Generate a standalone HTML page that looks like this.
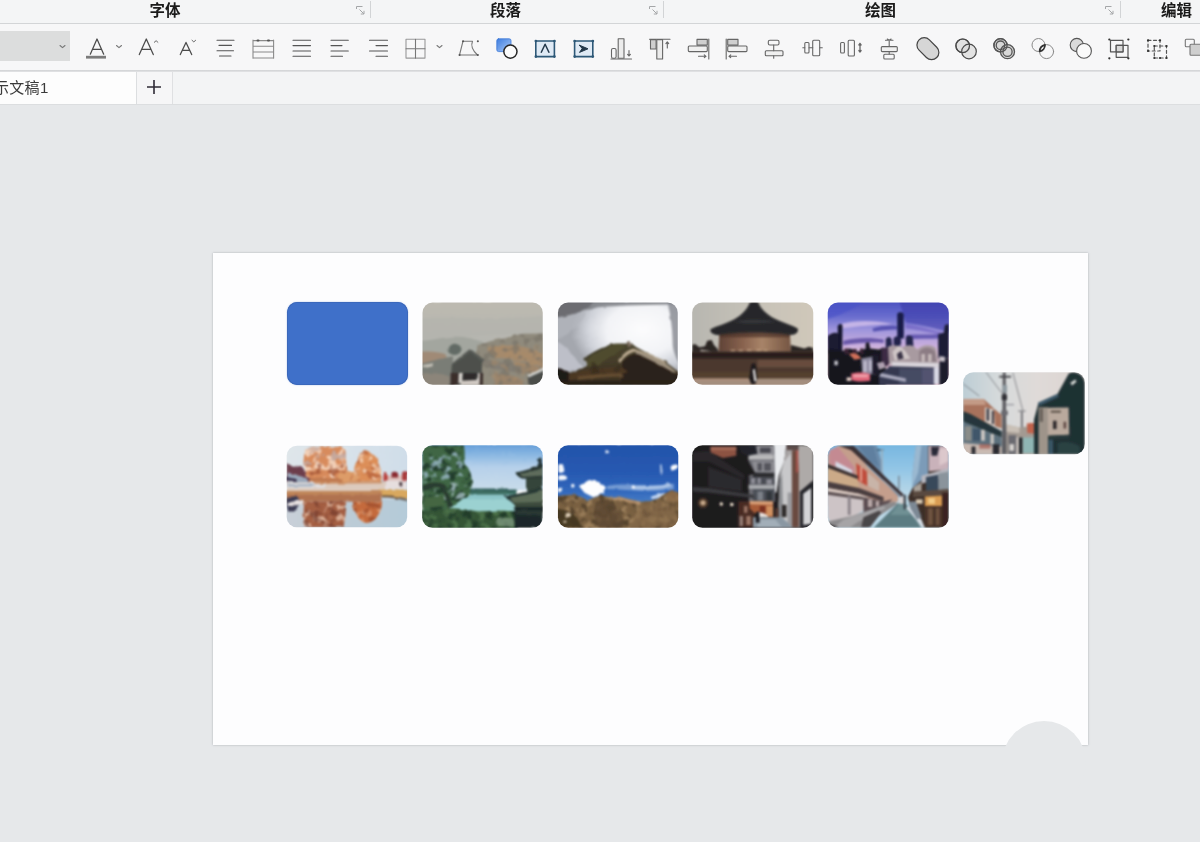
<!DOCTYPE html>
<html lang="zh-CN">
<head>
<meta charset="utf-8">
<title>演示文稿1</title>
<style>
html,body{margin:0;padding:0;}
body{width:1200px;height:842px;overflow:hidden;position:relative;background:#e6e8ea;font-family:"Liberation Sans","Noto Sans CJK SC",sans-serif;color:#222;}
.abs{position:absolute;}
#grp{left:0;top:0;width:1200px;height:23px;background:#f4f5f6;}
#grp .lbl{position:absolute;top:1px;font-size:15.500px;line-height:20px;font-weight:700;color:#1a1a1a;white-space:nowrap;filter:blur(.5px);}
#grp .vsep{position:absolute;top:1px;width:1px;height:17px;background:#d2d4d6;}
#grp .launch{position:absolute;top:6px;width:9px;height:9px;}
#ln1{left:0;top:23px;width:1200px;height:1px;background:#d3d5d7;}
#tools{left:0;top:24px;width:1200px;height:46px;background:#f7f7f8;}
#ln2{left:0;top:70px;width:1200px;height:2px;background:linear-gradient(#d0d2d4,#e4e5e7);}
#tabs{left:0;top:72px;width:1200px;height:32px;background:#f3f4f5;}
#tab1{left:0;top:0;width:136px;height:32px;background:#fdfdfd;border-right:1px solid #dcdee0;}
#tab1 span{position:absolute;left:-6px;top:6px;font-size:15px;line-height:20px;color:#3a3a3a;white-space:nowrap;filter:blur(.5px);letter-spacing:.3px}
#plus{left:137px;top:0;width:35px;height:32px;background:#f6f6f7;border-right:1px solid #dfe0e2;}
#ln3{left:0;top:104px;width:1200px;height:1px;background:#dcdee0;}
#fontbox{left:0;top:31px;width:70px;height:29.500px;background:#dcdddd;}
#slide{left:213px;top:253px;width:875px;height:492px;background:#fdfdfe;box-shadow:0 0 2px 0 rgba(120,125,135,.55);overflow:hidden;}
#wm{left:1001.500px;top:721px;width:84px;height:84px;border-radius:50%;background:#e6e8ea;}
.pic{position:absolute;width:121px;height:83px;border-radius:11px;overflow:hidden;}
.pic svg{position:absolute;left:0;top:0;}
</style>
</head>
<body>
<div id="grp" class="abs">
  <span class="lbl" style="left:149.500px">字体</span>
  <span class="lbl" style="left:490px">段落</span>
  <span class="lbl" style="left:865px">绘图</span>
  <span class="lbl" style="left:1161px">编辑</span>
  <svg class="launch" style="left:356px" viewBox="0 0 9 9"><path d="M.5 3V.5h6M3.500 3.500l4.500 4.500M8 4.800V8H4.800" fill="none" stroke="#a4a6a8" stroke-width="1"/></svg>
  <svg class="launch" style="left:649px" viewBox="0 0 9 9"><path d="M.5 3V.5h6M3.500 3.500l4.500 4.500M8 4.800V8H4.800" fill="none" stroke="#a4a6a8" stroke-width="1"/></svg>
  <svg class="launch" style="left:1105px" viewBox="0 0 9 9"><path d="M.5 3V.5h6M3.500 3.500l4.500 4.500M8 4.800V8H4.800" fill="none" stroke="#a4a6a8" stroke-width="1"/></svg>
  <i class="vsep" style="left:370px"></i>
  <i class="vsep" style="left:663px"></i>
  <i class="vsep" style="left:1120px"></i>
</div>
<div id="ln1" class="abs"></div>
<div id="tools" class="abs"></div>
<div id="fontbox" class="abs"></div>
<svg class="abs" style="left:0;top:24px;filter:blur(.45px)" width="1200" height="46" viewBox="0 24 1200 46" fill="none" stroke="#555" stroke-width="1.1" stroke-linecap="round" stroke-linejoin="round">
  <!-- dropdown chevrons -->
  <path d="M60 45.5l2.5 2.2l2.5-2.2M116.5 45.5l2.5 2.2l2.5-2.2M437 45.5l2.5 2.2l2.5-2.2" stroke="#777"/>
  <!-- font colour A -->
  <path d="M90.3 54.2L97 39l6.7 15.2M92.6 49.3h8.8" stroke="#4a4a4a" stroke-width="1.25"/>
  <rect x="86" y="55.8" width="20" height="2.8" fill="#7b7b7b" stroke="none"/>
  <!-- grow font -->
  <path d="M139.3 54.6L146.3 39l7 15.6M141.7 49.4h9.2" stroke="#4a4a4a" stroke-width="1.25"/>
  <path d="M154.3 42.3l1.8-1.6l1.8 1.6" stroke="#666" stroke-width="1"/>
  <!-- shrink font -->
  <path d="M180.3 54.6L186 42.4l5.7 12.2M182.3 50.4h7.4" stroke="#4a4a4a" stroke-width="1.25"/>
  <path d="M192 40.3l1.8 1.6l1.8-1.6" stroke="#666" stroke-width="1"/>
  <!-- line spacing -->
  <path d="M217 40.3h17M219 45.4h12.5M217 50.7h16.5M219.5 56h11.5"/>
  <!-- paragraph box -->
  <g stroke="#8a8a8a">
    <path d="M253 40v18.2M273.6 40v18.2M253 40.6h20.6M253 46.2h20.6M253 52h20.6M253 58h20.6"/>
    <path d="M257.5 40.6h1M268 40.6h1" stroke="#555" stroke-width="2"/>
  </g>
  <!-- justify -->
  <path d="M293 40.3h17.5M293 45.6h17.5M293 51h17.5M293 56.3h17.5"/>
  <!-- align left -->
  <path d="M331 40.3h17.3M331 45.6h11M331 51h17.3M331 56.3h11.5"/>
  <!-- align right -->
  <path d="M369.5 40.3h18M376 45.6h11.5M369.5 51h18M376 56.3h11.5"/>
  <!-- table -->
  <rect x="406" y="39.3" width="19" height="18.8" stroke="#999"/>
  <path d="M415.5 39.3v18.8M406 48.7h19" stroke="#777"/>
  <!-- freeform shape -->
  <path d="M459.5 55l3.5-13.8h9.5c-2 4.500 .5 9.500 5 13.800z" stroke="#777"/>
  <path d="M463 41.200h.1M477.800 41.200h.1M459.500 55h.1M477.800 55h.1" stroke="#555" stroke-width="2"/>
  <!-- shapes (blue) -->
  <defs><linearGradient id="gb" x1="0" y1="0" x2="1" y2="1"><stop offset="0" stop-color="#3f7ee0"/><stop offset="1" stop-color="#a9c9f6"/></linearGradient></defs>
  <rect x="496.800" y="38.800" width="14.200" height="12.800" rx="1.800" fill="url(#gb)" stroke="#3c78d8" stroke-width=".8"/>
  <circle cx="510.400" cy="51.600" r="6.600" fill="#fbfbfb" stroke="#262626" stroke-width="1.500"/>
  <!-- text box A -->
  <rect x="535.800" y="41" width="18.600" height="15.600" fill="#dfeaf5" stroke="#2d5877" stroke-width="1.600"/>
  <path d="M541.300 52.300l3.800-8l3.800 8" stroke="#23384a" stroke-width="1.500"/>
  <path d="M535.800 41h.1M554.400 41h.1M535.800 56.600h.1M554.400 56.600h.1" stroke="#2d5877" stroke-width="2.600"/>
  <!-- vertical text box -->
  <rect x="574.600" y="41" width="18.200" height="15.600" fill="#dfeaf5" stroke="#2d5877" stroke-width="1.600"/>
  <path d="M579.500 45.200l8.500 3.600l-8.500 3.600l2.500-3.600z" fill="#23384a" stroke="#23384a" stroke-width="1"/>
  <path d="M574.600 41h.1M592.800 41h.1M574.600 56.600h.1M592.800 56.600h.1" stroke="#2d5877" stroke-width="2.600"/>
  <!-- align bottom -->
  <g stroke="#666">
  <path d="M611 59h20.500"/>
  <rect x="611.500" y="48.500" width="4.600" height="9.800" rx="1.500"/>
  <rect x="618.200" y="38.800" width="5.800" height="19.500" fill="#ececec"/>
  <path d="M629 50.500v5.500M627.600 54.300l1.400 1.700l1.400-1.700"/>
  <!-- align top -->
  <path d="M649.500 39.200h20.500"/>
  <rect x="650.500" y="39.600" width="5.600" height="9.400" fill="#cfcfcf"/>
  <rect x="656.800" y="39.600" width="5.800" height="19.400" fill="#ececec"/>
  <path d="M667.300 42v6M665.900 43.600l1.400-1.700l1.400 1.700"/>
  <!-- align right -->
  <path d="M708.800 39v20"/>
  <rect x="697" y="39.400" width="10.300" height="5.700" fill="#cfcfcf"/>
  <rect x="688.300" y="46" width="19" height="5.600" rx="1" fill="#f0f0f0"/>
  <path d="M698.500 56.300h7.500M704.300 54.900l1.700 1.400l-1.700 1.400"/>
  <!-- align left -->
  <path d="M726.200 39v20"/>
  <rect x="727.700" y="39.400" width="10.300" height="5.700" fill="#cfcfcf"/>
  <rect x="727.700" y="46" width="19.300" height="5.600" rx="1" fill="#f0f0f0"/>
  <path d="M729 56.300h7.500M730.700 54.900l-1.700 1.400l1.700 1.400"/>
  <!-- center horizontally -->
  <rect x="768.300" y="40.200" width="10.700" height="4.800" rx="1.500"/>
  <rect x="765.300" y="50.800" width="17.700" height="5" rx="1" fill="#f0f0f0"/>
  <path d="M773.700 45v5.800M773.700 55.800v2.400"/>
  <!-- distribute h -->
  <rect x="804.800" y="42.500" width="4.200" height="10.500" rx="1"/>
  <rect x="812.700" y="40.200" width="7" height="15.600" rx="1"/>
  <path d="M802.800 47.800h2M809 47.800h3.700M819.700 47.800h2.600"/>
  <!-- distribute h 2 -->
  <rect x="840.600" y="42.500" width="3.800" height="10.500" rx="1"/>
  <rect x="848.200" y="40.200" width="6.200" height="15.800" rx="1"/>
  <path d="M860 43.500v8.500M858.900 45l1.100-1.500l1.100 1.500M858.900 50.500l1.100 1.500l1.100-1.500" stroke-width="1.300"/>
  <!-- center vertically -->
  <path d="M885.500 40.200h7.500M887.300 39l1.900 1.200l1.900-1.200"/>
  <path d="M889.200 41v5.500M889.200 51.500v2.500"/>
  <rect x="881.300" y="46.600" width="16" height="5" rx="1" fill="#f0f0f0"/>
  <rect x="883.800" y="54.200" width="10.400" height="4.800" rx="1"/>
  </g>
  <!-- merge shapes: union -->
  <rect x="-12.500" y="-7.300" width="25" height="14.600" rx="7.300" transform="translate(927.900 48.700) rotate(45)" fill="#d6d6d6" stroke="#444" stroke-width="1.200"/>
  <!-- combine -->
  <circle cx="962.700" cy="45.800" r="6.800" fill="#e2e2e2" stroke="#4a4a4a" stroke-width="1.200"/>
  <circle cx="969" cy="51.500" r="7.300" fill="#dcdcdc" fill-opacity=".75" stroke="#4a4a4a" stroke-width="1.200"/>
  <circle cx="962.700" cy="45.800" r="6.800" stroke="#4a4a4a" stroke-width="1.200"/>
  <!-- fragment -->
  <g stroke="#555" stroke-width="1.300">
  <circle cx="1000.500" cy="45.300" r="6.600" fill="#d8d8d8"/>
  <circle cx="1007.500" cy="51.700" r="7" fill="#d8d8d8"/>
  <circle cx="1000.500" cy="45.300" r="4.300"/>
  <circle cx="1007.500" cy="51.700" r="4.600"/>
  <circle cx="1000.500" cy="45.300" r="6.600"/>
  </g>
  <!-- intersect -->
  <circle cx="1038.500" cy="45" r="6.500" stroke="#888" stroke-width="1"/>
  <circle cx="1046.600" cy="51.600" r="7" stroke="#888" stroke-width="1"/>
  <path d="M1045 44.800A6.500 6.500 0 0 1 1039.600 51.400A7 7 0 0 1 1045 44.800Z" stroke="#333" stroke-width="1.700"/>
  <!-- subtract -->
  <circle cx="1076.800" cy="45" r="6.600" fill="#dadada" stroke="#555" stroke-width="1.100"/>
  <circle cx="1084" cy="50.900" r="7.400" fill="#fafafa" stroke="#555" stroke-width="1.100"/>
  <!-- group -->
  <g stroke="#555" stroke-width="1.200">
  <rect x="1110.500" y="40.300" width="12.500" height="11.500"/>
  <rect x="1116.200" y="45.300" width="11.800" height="12"/>
  <rect x="1116.200" y="45.300" width="6.800" height="6.500" fill="#d8d8d8"/>
  <path d="M1109.300 58.300h.1M1128.300 39.500h.1M1128.300 58.300h.1M1109.300 39.500h.1" stroke="#333" stroke-width="2.200"/>
  <!-- ungroup -->
  <rect x="1148" y="40.300" width="12" height="10.700" stroke-dasharray="3 2.500"/>
  <rect x="1154.300" y="46" width="12.200" height="12" stroke-dasharray="3 2.500"/>
  <path d="M1148 40.300h.1M1160 40.300h.1M1148 51h.1M1166.500 46h.1M1154.300 58h.1M1166.500 58h.1M1160 58h.1M1154.300 46h.1" stroke="#333" stroke-width="2.200"/>
  </g>
  <!-- bring forward (clipped) -->
  <rect x="1185.300" y="39.300" width="9" height="7.500" rx="1" stroke="#777"/>
  <rect x="1190" y="44.300" width="12" height="11" rx="1" fill="#cfcfcf" stroke="#777"/>
</svg>

<div id="ln2" class="abs"></div>
<div id="tabs" class="abs">
  <div id="tab1" class="abs"><span>示文稿1</span></div>
  <div id="plus" class="abs"><svg class="abs" style="left:8.500px;top:6.700px;filter:blur(.35px)" width="16" height="16" viewBox="0 0 16 16"><path d="M8 1v14M1 8h14" stroke="#2f2b36" stroke-width="1.6" fill="none"/></svg></div>
</div>
<div id="ln3" class="abs"></div>

<div id="slide" class="abs"></div>
<div class="abs" style="left:287px;top:302px;width:120.500px;height:82.800px;border-radius:10.500px;background:#3f70c9;box-shadow:inset 0 0 0 .8px #3a66b8,0 0 1.500px rgba(63,112,201,.55)"></div>
<svg class="abs" style="left:416px;top:296px" width="134" height="94" viewBox="0 0 1200 842">
<defs><clipPath id="cp2"><rect x="58" y="58" width="1077" height="737" rx="92"/></clipPath>
<filter id="bp2" x="0" y="0" width="1200" height="842" filterUnits="userSpaceOnUse" color-interpolation-filters="sRGB">
<feTurbulence type="fractalNoise" baseFrequency=".012" numOctaves="2" seed="3" result="n"/>
<feDisplacementMap in="SourceGraphic" in2="n" scale="22" xChannelSelector="R" yChannelSelector="G" result="d"/>
<feGaussianBlur in="d" stdDeviation="8"/>
</filter>
<filter id="mp2" x="0" y="0" width="1200" height="842" filterUnits="userSpaceOnUse" color-interpolation-filters="sRGB">
<feTurbulence type="fractalNoise" baseFrequency=".014" numOctaves="2" seed="21" result="n"/>
<feColorMatrix in="n" type="matrix" values="0 0 0 0 0  0 0 0 0 0  0 0 0 0 0  7 0 0 0 -3.500" result="a"/>
<feComposite in="SourceGraphic" in2="a" operator="in"/>
</filter>
<filter id="kp2" x="0" y="0" width="1200" height="842" filterUnits="userSpaceOnUse" color-interpolation-filters="sRGB">
<feTurbulence type="fractalNoise" baseFrequency=".016" numOctaves="2" seed="47" result="n"/>
<feColorMatrix in="n" type="matrix" values="0 0 0 0 0  0 0 0 0 0  0 0 0 0 0  0 7 0 0 -3.600" result="a"/>
<feComposite in="SourceGraphic" in2="a" operator="in"/>
</filter>
<filter id="ep2" x="-5%" y="-5%" width="110%" height="110%"><feGaussianBlur stdDeviation="3.500"/></filter></defs>
<g filter="url(#ep2)"><g clip-path="url(#cp2)"><g filter="url(#bp2)">
<defs><linearGradient id="p2s" x1="0" y1="0" x2="0" y2="1"><stop offset="0" stop-color="#bdbab0"/><stop offset=".45" stop-color="#b6b6b0"/><stop offset="1" stop-color="#a9aca6"/></linearGradient>
<path id="p2h" d="M560 440C640 410 700 395 760 385C840 372 900 345 960 338L1160 335L1160 820L420 820Z"/></defs>
<rect x="40" y="40" width="1120" height="780" fill="url(#p2s)"/>
<path d="M40 400C150 395 260 365 360 362C460 364 520 390 600 410L600 600L40 600Z" fill="#a3a69f"/>
<path d="M40 200C300 180 700 220 1160 180L1160 330L40 380Z" fill="#b2b3ad" opacity=".6"/>
<use href="#p2h" fill="#8f8a7c"/>
<path d="M640 470C720 440 800 440 900 445C980 450 1060 480 1140 520L1140 640C1040 600 900 560 780 560C700 560 660 520 640 470Z" fill="#a58a6c"/>
<path d="M880 600C940 590 1040 600 1100 640L1100 700L900 690Z" fill="#9f866a"/>
<path d="M720 700C800 690 900 720 960 760L960 820L700 820Z" fill="#9a846c"/>
<path d="M600 560L1000 640L1000 700L620 640Z" fill="#7f7b72" opacity=".8"/>
<use href="#p2h" fill="#787268" filter="url(#mp2)" opacity=".65"/>
<path d="M640 440L1160 420L1160 760L640 760Z" fill="#ad8c68" filter="url(#kp2)" opacity=".45"/>
<path d="M40 500C120 490 200 500 260 520L300 600L40 640Z" fill="#a08a76"/>
<path d="M40 610C140 580 240 560 330 540L330 820L40 820Z" fill="#7a7d76"/>
<path d="M60 620L150 600L150 630L60 650Z" fill="#c4c0b6"/>
<path d="M40 700C120 680 220 690 300 720L300 820L40 820Z" fill="#8c857a"/>
<ellipse cx="345" cy="478" rx="62" ry="50" fill="#626b65"/>
<path d="M485 475L610 570L590 600L590 800L310 800L320 620L330 600Z" fill="#4d504c"/>
<path d="M485 475L610 570L600 590L485 500L340 610L330 600Z" fill="#5a5d58"/>
<path d="M310 690L380 690L380 800L310 800Z" fill="#3a2d2a"/>
<path d="M385 690L420 690L410 780L380 780Z" fill="#d8d4cf"/>
<path d="M420 690L540 690L540 760L420 760Z" fill="#2e2c2c"/>
<path d="M400 760L570 750L570 800L400 800Z" fill="#cfc8c2"/>
<path d="M545 690L575 690L575 770L545 770Z" fill="#d2cdc8"/>
<path d="M570 690L600 690L600 800L570 800Z" fill="#3c302c"/>
<path d="M1000 720L1160 640L1160 820L1010 820Z" fill="#4b4d4a"/>
<path d="M1000 712L1160 632L1160 660L1010 730Z" fill="#cfd0cc"/>

</g></g></g></svg>
<svg class="abs" style="left:551px;top:296px" width="134" height="94" viewBox="0 0 1200 842">
<defs><clipPath id="cp3"><rect x="62" y="58" width="1073" height="737" rx="92"/></clipPath>
<filter id="bp3" x="0" y="0" width="1200" height="842" filterUnits="userSpaceOnUse" color-interpolation-filters="sRGB">
<feTurbulence type="fractalNoise" baseFrequency=".012" numOctaves="2" seed="4" result="n"/>
<feDisplacementMap in="SourceGraphic" in2="n" scale="25" xChannelSelector="R" yChannelSelector="G" result="d"/>
<feGaussianBlur in="d" stdDeviation="9"/>
</filter>
<filter id="mp3" x="0" y="0" width="1200" height="842" filterUnits="userSpaceOnUse" color-interpolation-filters="sRGB">
<feTurbulence type="fractalNoise" baseFrequency=".014" numOctaves="2" seed="22" result="n"/>
<feColorMatrix in="n" type="matrix" values="0 0 0 0 0  0 0 0 0 0  0 0 0 0 0  7 0 0 0 -3.500" result="a"/>
<feComposite in="SourceGraphic" in2="a" operator="in"/>
</filter>
<filter id="kp3" x="0" y="0" width="1200" height="842" filterUnits="userSpaceOnUse" color-interpolation-filters="sRGB">
<feTurbulence type="fractalNoise" baseFrequency=".016" numOctaves="2" seed="48" result="n"/>
<feColorMatrix in="n" type="matrix" values="0 0 0 0 0  0 0 0 0 0  0 0 0 0 0  0 7 0 0 -3.600" result="a"/>
<feComposite in="SourceGraphic" in2="a" operator="in"/>
</filter>
<filter id="ep3" x="-5%" y="-5%" width="110%" height="110%"><feGaussianBlur stdDeviation="3.500"/></filter></defs>
<g filter="url(#ep3)"><g clip-path="url(#cp3)"><g filter="url(#bp3)">
<defs>
<radialGradient id="p3s" cx="820" cy="300" r="640" gradientUnits="userSpaceOnUse" gradientTransform="translate(0 90) scale(1 .7)"><stop offset="0" stop-color="#fcfcfd"/><stop offset=".5" stop-color="#f2f3f6"/><stop offset=".78" stop-color="#cfd2d9"/><stop offset="1" stop-color="#a4a7ae"/></radialGradient>
<linearGradient id="p3m" x1="0" y1="0" x2="0" y2="1"><stop offset="0" stop-color="#4a4630"/><stop offset="1" stop-color="#3c2e20"/></linearGradient>
</defs>
<rect x="40" y="40" width="1120" height="780" fill="url(#p3s)"/>
<path d="M40 40L1160 40L1160 75C900 80 640 85 420 100C300 130 160 170 40 190Z" fill="#77797e" opacity=".8"/>
<path d="M40 40L380 40C370 100 250 170 40 195Z" fill="#66676b" opacity=".8"/>
<path d="M40 195C150 180 260 150 330 110C300 220 200 330 40 400Z" fill="#b4b7be" opacity=".7"/>
<path d="M1160 40L1040 40C1070 160 1090 300 1090 440C1100 520 1130 580 1160 620Z" fill="#85878e" opacity=".8"/>
<path d="M40 400C140 440 220 560 280 640L40 700Z" fill="#c3c6ce" opacity=".8"/>
<path d="M290 562C380 500 480 450 560 428C620 420 660 430 690 420L700 405L720 420C760 470 900 520 1010 580C1070 620 1110 660 1160 690L1160 820L40 820L40 640C80 640 110 660 150 690C220 680 280 640 330 620Z" fill="url(#p3m)"/>
<path d="M300 560C390 500 480 455 565 430C610 425 650 440 670 455C600 500 500 560 420 620C380 640 340 640 320 620Z" fill="#504c2e"/>
<path d="M290 562C380 500 480 450 560 428L566 442C480 467 390 517 300 578Z" fill="#3e3a28"/>
<path d="M680 410L715 405L725 450L690 460Z" fill="#7b6a5c"/>
<path d="M600 580C640 520 690 480 740 470C800 490 900 520 1010 580L1040 620C940 570 820 520 750 500C700 510 650 550 620 600Z" fill="#b8a78e"/>
<path d="M760 490C860 520 960 560 1050 620L1120 680L1100 690C1000 640 860 560 760 520Z" fill="#9c8f7c"/>
<path d="M640 590C700 520 760 510 800 530C900 580 1040 650 1160 720L1160 820L620 820Z" fill="#2b211a"/>
<path d="M150 700C300 660 480 640 640 640L700 690C500 700 330 720 160 760Z" fill="#4c3824"/>
<path d="M240 722C380 702 520 692 640 692L640 722C520 727 380 737 240 752Z" fill="#7a5c3a" opacity=".6"/>
<path d="M40 640C80 640 110 660 150 690L170 820L40 820Z" fill="#1f1a17"/>
<path d="M40 760L1160 760L1160 820L40 820Z" fill="#2a2019"/>
<path d="M300 600L620 600L620 700L300 700Z" fill="#342a1c" filter="url(#mp3)" opacity=".6"/>

</g></g></g></svg>
<svg class="abs" style="left:686px;top:296px" width="134" height="94" viewBox="0 0 1200 842">
<defs><clipPath id="cp4"><rect x="55" y="58" width="1085" height="737" rx="92"/></clipPath>
<filter id="bp4" x="0" y="0" width="1200" height="842" filterUnits="userSpaceOnUse" color-interpolation-filters="sRGB">
<feTurbulence type="fractalNoise" baseFrequency=".012" numOctaves="2" seed="5" result="n"/>
<feDisplacementMap in="SourceGraphic" in2="n" scale="10" xChannelSelector="R" yChannelSelector="G" result="d"/>
<feGaussianBlur in="d" stdDeviation="8"/>
</filter>
<filter id="mp4" x="0" y="0" width="1200" height="842" filterUnits="userSpaceOnUse" color-interpolation-filters="sRGB">
<feTurbulence type="fractalNoise" baseFrequency=".014" numOctaves="2" seed="23" result="n"/>
<feColorMatrix in="n" type="matrix" values="0 0 0 0 0  0 0 0 0 0  0 0 0 0 0  7 0 0 0 -3.500" result="a"/>
<feComposite in="SourceGraphic" in2="a" operator="in"/>
</filter>
<filter id="kp4" x="0" y="0" width="1200" height="842" filterUnits="userSpaceOnUse" color-interpolation-filters="sRGB">
<feTurbulence type="fractalNoise" baseFrequency=".016" numOctaves="2" seed="49" result="n"/>
<feColorMatrix in="n" type="matrix" values="0 0 0 0 0  0 0 0 0 0  0 0 0 0 0  0 7 0 0 -3.600" result="a"/>
<feComposite in="SourceGraphic" in2="a" operator="in"/>
</filter>
<filter id="ep4" x="-5%" y="-5%" width="110%" height="110%"><feGaussianBlur stdDeviation="3.500"/></filter></defs>
<g filter="url(#ep4)"><g clip-path="url(#cp4)"><g filter="url(#bp4)">
<defs>
<linearGradient id="p4s" x1="0" y1="0" x2="1" y2="0"><stop offset="0" stop-color="#b7b6b0"/><stop offset=".5" stop-color="#c6c2b8"/><stop offset="1" stop-color="#d0c8ba"/></linearGradient>
<linearGradient id="p4d" x1="0" y1="0" x2="1" y2="0"><stop offset="0" stop-color="#5e4236"/><stop offset=".35" stop-color="#8a6450"/><stop offset=".6" stop-color="#a88468"/><stop offset="1" stop-color="#745442"/></linearGradient>
</defs>
<rect x="40" y="40" width="1120" height="780" fill="url(#p4s)"/>
<path d="M300 320L930 320L940 500L290 500Z" fill="url(#p4d)"/>
<path d="M300 320L930 320L932 370L298 370Z" fill="#4a3026" opacity=".7"/>
<path d="M400 482h40v18h-40zM470 482h40v18h-40zM545 480h40v18h-40zM630 480h40v18h-40zM700 482h30v18h-30z" fill="#c9a88a" opacity=".8"/>
<path d="M570 60C590 50 630 50 650 60C670 120 740 180 830 220C900 250 960 270 1000 290C1010 320 990 345 940 350C800 320 420 320 290 350C230 345 210 320 222 295C280 270 350 250 400 225C480 190 550 120 570 60Z" fill="#28282b"/>
<path d="M430 230C540 215 700 215 800 230C700 240 540 240 430 230Z" fill="#3c3e44"/>
<path d="M55 440L80 430L120 460L170 450L190 400L230 395L250 440L280 470L290 500L55 500Z" fill="#2b2523"/>
<path d="M130 480L200 490L230 500L130 500Z" fill="#b8b2aa"/>
<path d="M940 440L1000 455L1060 470L1100 455L1140 465L1140 500L940 500Z" fill="#2a2523"/>
<path d="M40 498L1160 498L1160 565L40 565Z" fill="#30231f"/>
<path d="M40 520L1160 520L1160 540L40 540Z" fill="#251b18"/>
<path d="M40 562L1160 562L1160 740L40 740Z" fill="#4c382e"/>
<path d="M640 570L1160 570L1160 640L640 640Z" fill="#7a5a48" opacity=".6"/>
<path d="M40 680L1160 680L1160 745L40 745Z" fill="#54402f"/>
<path d="M40 738L1160 738L1160 820L40 820Z" fill="#a48e7e"/>
<path d="M40 738L560 738L560 760L40 760Z" fill="#ad8f7c"/>
<path d="M585 610L615 600L630 640L640 740L620 790L585 790L565 740Z" fill="#1e1a1c"/>
<path d="M598 660L615 655L632 760L612 765Z" fill="#e8e6e6"/>

</g></g></g></svg>
<svg class="abs" style="left:821px;top:296px" width="134" height="94" viewBox="0 0 1200 842">
<defs><clipPath id="cp5"><rect x="60" y="58" width="1085" height="737" rx="92"/></clipPath>
<filter id="bp5" x="0" y="0" width="1200" height="842" filterUnits="userSpaceOnUse" color-interpolation-filters="sRGB">
<feTurbulence type="fractalNoise" baseFrequency=".012" numOctaves="2" seed="6" result="n"/>
<feDisplacementMap in="SourceGraphic" in2="n" scale="14" xChannelSelector="R" yChannelSelector="G" result="d"/>
<feGaussianBlur in="d" stdDeviation="8"/>
</filter>
<filter id="mp5" x="0" y="0" width="1200" height="842" filterUnits="userSpaceOnUse" color-interpolation-filters="sRGB">
<feTurbulence type="fractalNoise" baseFrequency=".014" numOctaves="2" seed="24" result="n"/>
<feColorMatrix in="n" type="matrix" values="0 0 0 0 0  0 0 0 0 0  0 0 0 0 0  7 0 0 0 -3.500" result="a"/>
<feComposite in="SourceGraphic" in2="a" operator="in"/>
</filter>
<filter id="kp5" x="0" y="0" width="1200" height="842" filterUnits="userSpaceOnUse" color-interpolation-filters="sRGB">
<feTurbulence type="fractalNoise" baseFrequency=".016" numOctaves="2" seed="50" result="n"/>
<feColorMatrix in="n" type="matrix" values="0 0 0 0 0  0 0 0 0 0  0 0 0 0 0  0 7 0 0 -3.600" result="a"/>
<feComposite in="SourceGraphic" in2="a" operator="in"/>
</filter>
<filter id="ep5" x="-5%" y="-5%" width="110%" height="110%"><feGaussianBlur stdDeviation="3.500"/></filter></defs>
<g filter="url(#ep5)"><g clip-path="url(#cp5)"><g filter="url(#bp5)">
<defs>
<linearGradient id="p5s" x1="0" y1="0" x2="0" y2="1"><stop offset="0" stop-color="#4a50c0"/><stop offset=".18" stop-color="#686cce"/><stop offset=".34" stop-color="#a096dc"/><stop offset=".52" stop-color="#c9aedd"/><stop offset=".62" stop-color="#e6c6d8"/><stop offset="1" stop-color="#d8b0c0"/></linearGradient>
</defs>
<rect x="40" y="40" width="1120" height="780" fill="url(#p5s)"/>
<path d="M700 40L1160 40L1160 330C1060 300 900 260 760 240Z" fill="#3a3aa8" opacity=".6"/>
<path d="M40 40L400 40C300 120 160 180 40 210Z" fill="#4a52c8" opacity=".7"/>
<path d="M180 250C300 215 480 215 640 250C500 260 320 270 180 290Z" fill="#d8c4ec" opacity=".75"/>
<path d="M460 290C540 265 620 262 680 270L680 300C600 300 520 310 470 320Z" fill="#4a46a8" opacity=".85"/>
<path d="M200 400C320 370 460 370 560 390L560 420C440 410 320 420 200 440Z" fill="#5a4aa0" opacity=".85"/>
<path d="M760 350C860 340 980 350 1060 340L1060 380C960 385 860 380 760 390Z" fill="#5448a8" opacity=".8"/>
<path d="M760 250C880 270 1000 300 1100 330L1100 350C980 330 860 300 760 290Z" fill="#6a5cc0" opacity=".6"/>
<path d="M683 160C690 140 730 140 740 160L742 380L683 380Z" fill="#181c48"/>
<path d="M150 270C160 245 185 245 192 265L190 500L150 500Z" fill="#15162c"/>
<path d="M60 360C90 330 130 320 160 340L175 520L60 520Z" fill="#1a1a30"/>
<path d="M1050 340L1100 330L1110 260L1145 250L1145 560L1050 560Z" fill="#1b1c34"/>
<path d="M580 390C590 360 625 360 632 390L640 480L580 480Z" fill="#24264c"/>
<path d="M650 380C665 355 705 355 715 380L720 470L650 470Z" fill="#20224a"/>
<path d="M760 370C780 345 810 350 822 375L830 470L760 470Z" fill="#23254a"/>
<path d="M60 480L200 490L260 470L330 500L400 470L400 420L430 415L440 470L520 480L560 460L580 500L580 820L60 820Z" fill="#17171f"/>
<path d="M210 470h40v50h-40zM280 475h40v50h-40zM350 470h30v50h-30z" fill="#3a2434"/>
<path d="M250 520C300 500 340 520 360 560L300 570Z" fill="#d0705a"/>
<path d="M570 480C620 430 680 430 720 470C760 430 830 430 860 480C900 440 980 420 1030 470L1050 600L570 620Z" fill="#a89aa0"/>
<path d="M640 500L700 440L760 500L800 560L660 580Z" fill="#cfc6c6"/>
<path d="M880 500C920 450 980 450 1020 500L1030 590L880 590Z" fill="#8c7c84"/>
<path d="M900 520h30v70h-30zM960 520h30v70h-30z" fill="#c8bcbc"/>
<path d="M680 520L720 490L740 560L690 570Z" fill="#3a3446"/>
<path d="M540 470L600 460L610 620L540 640Z" fill="#3c2c44"/>
<path d="M360 560L470 540L500 700L370 700Z" fill="#8a869c"/>
<path d="M380 580h30v100h-30zM430 575h30v100h-30z" fill="#c8c6d6" opacity=".8"/>
<path d="M460 520L520 520L520 700L460 700Z" fill="#1c1a2a"/>
<path d="M630 590L1060 600L1080 640L640 640Z" fill="#d8d4da"/>
<path d="M620 630L1020 640L1020 800L520 800L520 700Z" fill="#343850"/>
<path d="M700 650h200v140h-200z" fill="#4a5068" opacity=".8"/>
<path d="M900 650h110v140h-110z" fill="#5a5a78" opacity=".8"/>
<path d="M540 690L760 740L760 770L520 720Z" fill="#a8a8bc"/>
<path d="M1010 640L1060 640L1060 790L1010 790Z" fill="#d8d8e4"/>
<path d="M1060 560L1145 560L1145 800L1060 800Z" fill="#1c1c2c"/>
<path d="M1060 540L1110 545L1110 590L1060 585Z" fill="#c8c0c8"/>
<path d="M270 695C320 680 400 680 440 700L440 760C380 770 320 770 275 755Z" fill="#e0657a"/>
<path d="M290 705h130v22h-130z" fill="#f0a8b0"/>
<path d="M230 730L270 730L270 760L230 760Z" fill="#f0d8d0"/>
<path d="M120 580L150 580L150 620L120 620Z" fill="#c8c8d0"/>
<path d="M500 600L560 590L580 640L520 660Z" fill="#d0c0d0" opacity=".8"/>

</g></g></g></svg>
<svg class="abs" style="left:957px;top:366px" width="134" height="94" viewBox="0 0 1200 842">
<defs><clipPath id="cp6"><rect x="55" y="55" width="1090" height="735" rx="92"/></clipPath>
<filter id="bp6" x="0" y="0" width="1200" height="842" filterUnits="userSpaceOnUse" color-interpolation-filters="sRGB">
<feTurbulence type="fractalNoise" baseFrequency=".012" numOctaves="2" seed="7" result="n"/>
<feDisplacementMap in="SourceGraphic" in2="n" scale="8" xChannelSelector="R" yChannelSelector="G" result="d"/>
<feGaussianBlur in="d" stdDeviation="8.5"/>
</filter>
<filter id="mp6" x="0" y="0" width="1200" height="842" filterUnits="userSpaceOnUse" color-interpolation-filters="sRGB">
<feTurbulence type="fractalNoise" baseFrequency=".014" numOctaves="2" seed="25" result="n"/>
<feColorMatrix in="n" type="matrix" values="0 0 0 0 0  0 0 0 0 0  0 0 0 0 0  7 0 0 0 -3.500" result="a"/>
<feComposite in="SourceGraphic" in2="a" operator="in"/>
</filter>
<filter id="kp6" x="0" y="0" width="1200" height="842" filterUnits="userSpaceOnUse" color-interpolation-filters="sRGB">
<feTurbulence type="fractalNoise" baseFrequency=".016" numOctaves="2" seed="51" result="n"/>
<feColorMatrix in="n" type="matrix" values="0 0 0 0 0  0 0 0 0 0  0 0 0 0 0  0 7 0 0 -3.600" result="a"/>
<feComposite in="SourceGraphic" in2="a" operator="in"/>
</filter>
<filter id="ep6" x="-5%" y="-5%" width="110%" height="110%"><feGaussianBlur stdDeviation="3.500"/></filter></defs>
<g filter="url(#ep6)"><g clip-path="url(#cp6)"><g filter="url(#bp6)">
<defs>
<linearGradient id="p6s" x1="0" y1="0" x2="1" y2="0"><stop offset="0" stop-color="#bccdd5"/><stop offset=".3" stop-color="#d6dadb"/><stop offset=".6" stop-color="#dfdad8"/><stop offset="1" stop-color="#dcd4d0"/></linearGradient>
</defs>
<rect x="40" y="40" width="1120" height="780" fill="url(#p6s)"/>
<path d="M55 160L200 270M260 55L400 240M500 60L590 400" stroke="#5a5a60" stroke-width="7" fill="none" opacity=".8"/>
<!-- left building -->
<path d="M55 295L240 295L330 380L400 440L400 560L55 440Z" fill="#a8725c"/>
<path d="M55 295L240 295L260 350L55 350Z" fill="#c39a86"/>
<path d="M250 370L330 390L340 540L250 500Z" fill="#d8cfc8"/>
<path d="M265 380h22v110h-22zM312 400h18v120h-18z" fill="#3a3a44"/>
<path d="M55 405L120 430L400 585L400 640L55 500Z" fill="#25363c"/>
<path d="M55 500L400 640L400 790L55 790Z" fill="#5c6f7c"/>
<path d="M70 540h60v130h-60z" fill="#8a8c88"/>
<path d="M140 560h70v110h-70z" fill="#40566a"/>
<path d="M215 570h35v100h-35zM300 610h30v90h-30z" fill="#c8c4c0"/>
<path d="M55 690L400 720L400 790L55 790Z" fill="#c9bab2"/>
<path d="M130 720h35v70h-35zM320 700h60v90h-60z" fill="#2a2a30"/>
<path d="M200 700h100v40h-100z" fill="#a05a50" opacity=".7"/>
<!-- mid buildings -->
<path d="M440 525L560 550L640 540L720 560L720 790L440 790Z" fill="#a39a92"/>
<path d="M440 525L560 550L560 600L440 590Z" fill="#c9c0b6"/>
<path d="M460 620h70v170h-70z" fill="#6a6a70"/>
<path d="M470 700h40v60h-40z" fill="#d8d4d0"/>
<path d="M530 640h60v150h-60z" fill="#c4bdb8"/>
<path d="M555 640h32v150h-32z" fill="#1e2428"/>
<path d="M625 515C660 505 700 510 722 525L722 610L630 600Z" fill="#bf624c"/>
<path d="M590 640L700 640L700 780L590 780Z" fill="#8fb6b4"/>
<path d="M700 600L740 600L740 790L700 790Z" fill="#1e3034"/>
<!-- small pole -->
<path d="M572 400h18v150h-18z" fill="#77777c"/>
<path d="M548 398h66v12h-66z" fill="#8a8a8e"/>
<!-- main pole -->
<path d="M410 55L436 55L444 790L402 790Z" fill="#5e5e62"/>
<path d="M378 88h105v16h-105z" fill="#3f3f44"/>
<path d="M408 170h40v70h-40z" fill="#8f9aa0"/>
<path d="M400 255h48v50h-48z" fill="#2e2e34"/>
<path d="M440 340h70v12h-70z" fill="#9a9aa0"/>
<path d="M395 400h60v40h-60z" fill="#6a6a70"/>
<!-- right teal building -->
<path d="M1040 55C1100 55 1145 100 1145 160L1145 790L690 790L690 480L730 330L900 250L1000 70C1010 60 1025 55 1040 55Z" fill="#1f3033"/>
<path d="M725 330L900 250L912 275L735 358Z" fill="#3c586a"/>
<path d="M730 370L815 370L815 790L730 790Z" fill="#9e948a"/>
<path d="M740 380h30v120h-30z" fill="#6a625c"/>
<path d="M812 375L1000 372L1005 615L815 625Z" fill="#b9a99d"/>
<path d="M840 400h90v18h-90z" fill="#5a5048"/>
<path d="M860 490h32v75h-32z" fill="#2e2a2c"/>
<path d="M955 500h22v60h-22z" fill="#5a4440"/>
<path d="M815 625L1005 615L1005 650L815 655Z" fill="#2a3a3c"/>
<path d="M820 660h40v130h-40z" fill="#3a5666"/>
<path d="M1015 150L1060 120L1070 140L1030 175Z" fill="#d8dcd8"/>
<path d="M900 690C960 670 1040 680 1100 720L1100 790L900 790Z" fill="#2f4a4a" opacity=".7"/>

</g></g></g></svg>
<svg class="abs" style="left:281px;top:439px" width="134" height="94" viewBox="0 0 1200 842">
<defs><clipPath id="cp7"><rect x="50" y="60" width="1080" height="730" rx="92"/></clipPath>
<filter id="bp7" x="0" y="0" width="1200" height="842" filterUnits="userSpaceOnUse" color-interpolation-filters="sRGB">
<feTurbulence type="fractalNoise" baseFrequency=".012" numOctaves="2" seed="8" result="n"/>
<feDisplacementMap in="SourceGraphic" in2="n" scale="30" xChannelSelector="R" yChannelSelector="G" result="d"/>
<feGaussianBlur in="d" stdDeviation="8"/>
</filter>
<filter id="mp7" x="0" y="0" width="1200" height="842" filterUnits="userSpaceOnUse" color-interpolation-filters="sRGB">
<feTurbulence type="fractalNoise" baseFrequency=".014" numOctaves="2" seed="26" result="n"/>
<feColorMatrix in="n" type="matrix" values="0 0 0 0 0  0 0 0 0 0  0 0 0 0 0  7 0 0 0 -3.500" result="a"/>
<feComposite in="SourceGraphic" in2="a" operator="in"/>
</filter>
<filter id="kp7" x="0" y="0" width="1200" height="842" filterUnits="userSpaceOnUse" color-interpolation-filters="sRGB">
<feTurbulence type="fractalNoise" baseFrequency=".016" numOctaves="2" seed="52" result="n"/>
<feColorMatrix in="n" type="matrix" values="0 0 0 0 0  0 0 0 0 0  0 0 0 0 0  0 7 0 0 -3.600" result="a"/>
<feComposite in="SourceGraphic" in2="a" operator="in"/>
</filter>
<filter id="ep7" x="-5%" y="-5%" width="110%" height="110%"><feGaussianBlur stdDeviation="3.500"/></filter></defs>
<g filter="url(#ep7)"><g clip-path="url(#cp7)"><g filter="url(#bp7)">
<defs>
<linearGradient id="p7s" x1="0" y1="0" x2="1" y2="0"><stop offset="0" stop-color="#dfe6ea"/><stop offset=".6" stop-color="#d6e1ea"/><stop offset="1" stop-color="#cfdde9"/></linearGradient>
<linearGradient id="p7w" x1="0" y1="0" x2="1" y2="0"><stop offset="0" stop-color="#c9d0d8"/><stop offset=".5" stop-color="#bccbd6"/><stop offset="1" stop-color="#b4cbd9"/></linearGradient>
<path id="p7t1" d="M215 120C230 80 290 60 330 75C370 55 430 55 460 80C500 60 560 70 575 110C590 150 575 200 590 250C600 300 585 340 540 350L250 350C220 330 230 300 215 270C195 230 200 160 215 120Z"/>
<path id="p7t2" d="M735 105C760 95 790 110 810 135C850 150 870 180 860 215C890 250 905 290 895 330C910 350 900 370 880 378L620 380C615 345 640 320 655 290C650 250 670 225 690 200C685 160 705 125 735 105Z"/>
<path id="p7r1" d="M200 560L580 560C590 640 570 720 560 790L210 790C190 720 190 640 200 560Z"/>
<path id="p7r2" d="M640 560L905 560C905 610 890 650 870 680C850 720 810 750 765 752C720 748 690 710 675 670C655 640 645 600 640 560Z"/>
</defs>
<rect x="40" y="40" width="1120" height="780" fill="url(#p7s)"/>
<path d="M40 540L1160 540L1160 820L40 820Z" fill="url(#p7w)"/>
<!-- left building -->
<path d="M50 210L120 260L170 240L250 330L300 380L300 410L50 410Z" fill="#6c3e4c"/>
<path d="M60 300L230 350L240 400L60 400Z" fill="#9aa8ba"/>
<path d="M50 340L140 360L140 385L50 380Z" fill="#3c3450"/>
<!-- trees -->
<use href="#p7t1" fill="#d88b5c"/>
<use href="#p7t2" fill="#dc8e58"/>
<path d="M520 300L700 290L720 385L500 385Z" fill="#dd9c68"/>
<use href="#p7t1" fill="#f4d4bc" filter="url(#mp7)" opacity=".95"/>
<use href="#p7t1" fill="#9a4c30" filter="url(#kp7)" opacity=".7"/>
<path d="M200 60L600 60L600 230L200 230Z" fill="#dde5ea" filter="url(#kp7)" opacity=".55"/>
<use href="#p7t2" fill="#f4d6bc" filter="url(#kp7)" opacity=".85"/>
<use href="#p7t2" fill="#a85030" filter="url(#mp7)" opacity=".55"/>
<path d="M250 350L540 350L560 390L240 390Z" fill="#c07a50"/>
<!-- right red -->
<path d="M915 330L1130 320L1130 380L915 380Z" fill="#dcc0bc"/>
<path d="M918 320C930 300 950 300 955 320L955 375L918 375Z" fill="#b8403c"/>
<path d="M1085 300C1100 285 1125 285 1130 300L1130 375L1085 375Z" fill="#a8383a"/>
<path d="M990 300C1010 288 1040 290 1048 310L1048 345L990 345Z" fill="#8a2a30"/>

<path d="M940 372L1130 372L1130 445L940 445Z" fill="#e6dede"/>
<path d="M1060 385h25v40h-25z" fill="#4a3a40"/>
<path d="M880 380L940 385L940 410L870 410Z" fill="#5a4038"/>
<!-- bank -->
<path d="M50 392L940 385L940 470L50 470Z" fill="#dccabd"/>
<path d="M50 392L400 388L400 440L50 440Z" fill="#dfdcdc"/>
<path d="M60 405L300 405L300 425L60 425Z" fill="#8098b0" opacity=".6"/>
<path d="M300 380L900 374L900 398L300 402Z" fill="#c98a5c" opacity=".75"/>
<path d="M880 455C960 445 1060 450 1130 460L1130 540C1060 520 980 515 900 520Z" fill="#d9a85e"/>
<path d="M900 505C980 500 1060 510 1130 540L1130 560C1060 540 980 525 900 525Z" fill="#4a3a30" opacity=".7"/>
<!-- reflection band -->
<path id="p7b" d="M50 465L900 465L900 560L50 560Z" fill="#b07250"/>
<use href="#p7b" fill="#e0b090" filter="url(#mp7)" opacity=".7"/>
<path d="M50 465L900 465L900 500L50 500Z" fill="#c89060" opacity=".7"/>
<path d="M50 520L130 515L180 560L120 650L50 650Z" fill="#3a3a52"/>
<path d="M60 570L200 545L200 580L60 610Z" fill="#e6e0e0"/>
<!-- reflected trees -->
<use href="#p7r1" fill="#a45e42"/>
<use href="#p7r1" fill="#e6c0a8" filter="url(#kp7)" opacity=".8"/>
<use href="#p7r1" fill="#6a3428" filter="url(#mp7)" opacity=".6"/>
<use href="#p7r2" fill="#c46a3c"/>
<use href="#p7r2" fill="#eab896" filter="url(#mp7)" opacity=".7"/>
<use href="#p7r2" fill="#8a4028" filter="url(#kp7)" opacity=".5"/>

</g></g></g></svg>
<svg class="abs" style="left:416px;top:439px" width="134" height="94" viewBox="0 0 1200 842">
<defs><clipPath id="cp8"><rect x="55" y="55" width="1080" height="740" rx="92"/></clipPath>
<filter id="bp8" x="0" y="0" width="1200" height="842" filterUnits="userSpaceOnUse" color-interpolation-filters="sRGB">
<feTurbulence type="fractalNoise" baseFrequency=".012" numOctaves="2" seed="9" result="n"/>
<feDisplacementMap in="SourceGraphic" in2="n" scale="24" xChannelSelector="R" yChannelSelector="G" result="d"/>
<feGaussianBlur in="d" stdDeviation="8"/>
</filter>
<filter id="mp8" x="0" y="0" width="1200" height="842" filterUnits="userSpaceOnUse" color-interpolation-filters="sRGB">
<feTurbulence type="fractalNoise" baseFrequency=".014" numOctaves="2" seed="27" result="n"/>
<feColorMatrix in="n" type="matrix" values="0 0 0 0 0  0 0 0 0 0  0 0 0 0 0  7 0 0 0 -3.500" result="a"/>
<feComposite in="SourceGraphic" in2="a" operator="in"/>
</filter>
<filter id="kp8" x="0" y="0" width="1200" height="842" filterUnits="userSpaceOnUse" color-interpolation-filters="sRGB">
<feTurbulence type="fractalNoise" baseFrequency=".016" numOctaves="2" seed="53" result="n"/>
<feColorMatrix in="n" type="matrix" values="0 0 0 0 0  0 0 0 0 0  0 0 0 0 0  0 7 0 0 -3.600" result="a"/>
<feComposite in="SourceGraphic" in2="a" operator="in"/>
</filter>
<filter id="ep8" x="-5%" y="-5%" width="110%" height="110%"><feGaussianBlur stdDeviation="3.500"/></filter></defs>
<g filter="url(#ep8)"><g clip-path="url(#cp8)"><g filter="url(#bp8)">
<defs>
<linearGradient id="p8s" x1="0" y1="0" x2="0" y2="1"><stop offset="0" stop-color="#629cd8"/><stop offset=".25" stop-color="#8bb8e2"/><stop offset=".5" stop-color="#b6d0ea"/><stop offset="1" stop-color="#c9dcea"/></linearGradient>
<path id="p8t" d="M55 55L430 55C440 120 430 180 445 230C490 280 510 360 495 440C480 500 450 530 420 530C380 560 340 600 300 620L55 650Z"/>
<path id="p8b" d="M40 640C200 600 400 620 560 650C700 640 800 640 900 650L900 820L40 820Z"/>
</defs>
<rect x="40" y="40" width="1120" height="420" fill="url(#p8s)"/>
<path d="M480 445L900 445L900 505L480 505Z" fill="#3d6d62"/>
<path d="M480 445L900 445L900 462L480 462Z" fill="#2f5a58"/>
<path d="M300 500L900 500L900 660L300 660Z" fill="#9bd1d1"/>
<path d="M300 500L900 500L900 540L300 540Z" fill="#8cc4c8"/>
<use href="#p8b" fill="#345436"/>
<use href="#p8b" fill="#1f3828" filter="url(#mp8)" opacity=".85"/>
<use href="#p8b" fill="#5f8a58" filter="url(#kp8)" opacity=".55"/>
<path d="M720 720C780 700 840 700 880 720L880 780L730 770Z" fill="#a8c0a8" opacity=".5"/>
<!-- tree -->
<use href="#p8t" fill="#3f6644"/>
<use href="#p8t" fill="#223c2c" filter="url(#mp8)" opacity=".95"/>
<path d="M60 180L420 100L430 330L60 400Z" fill="#a9c6dc" filter="url(#kp8)" opacity=".7"/>
<path d="M150 400L480 380L420 530L160 560Z" fill="#b9d0d8" filter="url(#kp8)" opacity=".7"/>
<path d="M60 420C120 380 200 380 260 410L330 600L300 620L230 440C180 420 120 430 60 470Z" fill="#2a3c30"/>
<path d="M70 520L250 510L260 600L70 620Z" fill="#446642"/>
<!-- pagoda -->
<path d="M1085 180L1125 175L1130 240L1090 245Z" fill="#253538"/>
<path d="M890 300C960 290 1060 260 1135 225L1135 350L960 355C930 350 900 330 890 300Z" fill="#26332f"/>
<path d="M920 312C990 302 1070 282 1135 258L1135 330L960 340Z" fill="#5e6c5c"/>
<path d="M985 350L1135 345L1135 460L985 470Z" fill="#34443a"/>
<path d="M780 515C880 500 1020 470 1135 435L1135 620L900 620C870 560 820 540 780 515Z" fill="#233432"/>
<path d="M830 528C920 513 1040 488 1135 462L1135 570L880 575Z" fill="#5c6c58"/>
<path d="M880 570L1135 565L1135 620L890 620Z" fill="#3c4a3c"/>
<path d="M885 610L1135 610L1135 800L885 800Z" fill="#1b2829"/>
<path d="M900 640h235v40h-235z" fill="#2a3834"/>

</g></g></g></svg>
<svg class="abs" style="left:551px;top:439px" width="134" height="94" viewBox="0 0 1200 842">
<defs><clipPath id="cp9"><rect x="62" y="55" width="1078" height="740" rx="92"/></clipPath>
<filter id="bp9" x="0" y="0" width="1200" height="842" filterUnits="userSpaceOnUse" color-interpolation-filters="sRGB">
<feTurbulence type="fractalNoise" baseFrequency=".012" numOctaves="2" seed="10" result="n"/>
<feDisplacementMap in="SourceGraphic" in2="n" scale="22" xChannelSelector="R" yChannelSelector="G" result="d"/>
<feGaussianBlur in="d" stdDeviation="7.5"/>
</filter>
<filter id="mp9" x="0" y="0" width="1200" height="842" filterUnits="userSpaceOnUse" color-interpolation-filters="sRGB">
<feTurbulence type="fractalNoise" baseFrequency=".014" numOctaves="2" seed="28" result="n"/>
<feColorMatrix in="n" type="matrix" values="0 0 0 0 0  0 0 0 0 0  0 0 0 0 0  7 0 0 0 -3.500" result="a"/>
<feComposite in="SourceGraphic" in2="a" operator="in"/>
</filter>
<filter id="kp9" x="0" y="0" width="1200" height="842" filterUnits="userSpaceOnUse" color-interpolation-filters="sRGB">
<feTurbulence type="fractalNoise" baseFrequency=".016" numOctaves="2" seed="54" result="n"/>
<feColorMatrix in="n" type="matrix" values="0 0 0 0 0  0 0 0 0 0  0 0 0 0 0  0 7 0 0 -3.600" result="a"/>
<feComposite in="SourceGraphic" in2="a" operator="in"/>
</filter>
<filter id="ep9" x="-5%" y="-5%" width="110%" height="110%"><feGaussianBlur stdDeviation="3.500"/></filter></defs>
<g filter="url(#ep9)"><g clip-path="url(#cp9)"><g filter="url(#bp9)">
<defs>
<linearGradient id="p9s" x1="0" y1="0" x2="0" y2="1"><stop offset="0" stop-color="#2253aa"/><stop offset=".35" stop-color="#285ab2"/><stop offset=".55" stop-color="#3268bc"/><stop offset=".7" stop-color="#4c82c8"/></linearGradient>
<path id="p9m" d="M40 515L120 505L200 498L270 520L330 548L400 520L450 508L520 520L600 515L700 540L800 562L880 555L950 540L1020 490L1080 458L1140 480L1160 480L1160 820L40 820Z"/>
</defs>
<rect x="40" y="40" width="1120" height="780" fill="url(#p9s)"/>
<path d="M500 420C620 400 760 410 900 420L1100 400L1100 450C960 470 800 470 720 460C640 455 560 450 500 450Z" fill="#86a8d8" opacity=".8"/>
<path d="M720 425C800 415 900 420 1000 415L1060 390L1080 420C1000 450 860 455 730 450Z" fill="#c2d4ee" opacity=".7"/>
<path d="M880 520C940 500 990 490 1020 480L1010 520L900 540Z" fill="#d8e4f4" opacity=".85"/>
<path d="M250 420L340 368L430 385L490 430L470 490L380 522L300 482Z" fill="#fdfdfe"/>
<path d="M65 230C90 215 110 230 112 260C125 290 115 300 100 300C85 310 70 300 65 290Z" fill="#f4f7fc"/>
<path d="M65 330C100 315 140 325 145 350C140 370 100 375 65 365Z" fill="#f4f7fc"/>
<path d="M60 440C80 435 100 450 100 470L60 480Z" fill="#eef2f9"/>
<ellipse cx="195" cy="418" rx="16" ry="18" fill="#eaf0f9"/>
<ellipse cx="498" cy="115" rx="12" ry="16" fill="#dfe8f6"/>
<ellipse cx="737" cy="430" rx="15" ry="15" fill="#f4f7fc"/>
<path d="M1070 250C1085 228 1120 222 1138 235C1140 260 1110 282 1078 282Z" fill="#fbfcfe"/>
<path d="M975 230L990 225L1000 290L990 330L978 290Z" fill="#c4d4ec" opacity=".8"/>
<use href="#p9m" fill="#7a6142"/>
<use href="#p9m" fill="#4c3c28" filter="url(#mp9)" opacity=".8"/>
<use href="#p9m" fill="#a88a64" filter="url(#kp9)" opacity=".7"/>
<path d="M520 520L600 515L700 540L800 562L800 590L700 570L600 545Z" fill="#c09a74" opacity=".8"/>
<path d="M1020 490L1080 458L1140 480L1140 560L1040 560Z" fill="#8c6c48" opacity=".8"/>
<path d="M400 560L520 540L660 720L640 790L420 790L380 680Z" fill="#5a4630" opacity=".75"/>
<path d="M40 620L140 640L230 700L280 790L40 790Z" fill="#43361f" opacity=".9"/>
<path d="M130 670C150 655 175 660 180 680C175 700 150 705 130 695Z" fill="#d8c8b0"/>
<path d="M110 735C125 725 140 730 140 745L115 755Z" fill="#c8b8a0"/>
<path d="M800 600L1000 560L1100 600L1140 700L1140 790L700 790Z" fill="#86694a" opacity=".6"/>

</g></g></g></svg>
<svg class="abs" style="left:686px;top:439px" width="134" height="94" viewBox="0 0 1200 842">
<defs><clipPath id="cp10"><rect x="55" y="55" width="1085" height="740" rx="92"/></clipPath>
<filter id="bp10" x="0" y="0" width="1200" height="842" filterUnits="userSpaceOnUse" color-interpolation-filters="sRGB">
<feTurbulence type="fractalNoise" baseFrequency=".012" numOctaves="2" seed="11" result="n"/>
<feDisplacementMap in="SourceGraphic" in2="n" scale="8" xChannelSelector="R" yChannelSelector="G" result="d"/>
<feGaussianBlur in="d" stdDeviation="8.5"/>
</filter>
<filter id="mp10" x="0" y="0" width="1200" height="842" filterUnits="userSpaceOnUse" color-interpolation-filters="sRGB">
<feTurbulence type="fractalNoise" baseFrequency=".014" numOctaves="2" seed="29" result="n"/>
<feColorMatrix in="n" type="matrix" values="0 0 0 0 0  0 0 0 0 0  0 0 0 0 0  7 0 0 0 -3.500" result="a"/>
<feComposite in="SourceGraphic" in2="a" operator="in"/>
</filter>
<filter id="kp10" x="0" y="0" width="1200" height="842" filterUnits="userSpaceOnUse" color-interpolation-filters="sRGB">
<feTurbulence type="fractalNoise" baseFrequency=".016" numOctaves="2" seed="55" result="n"/>
<feColorMatrix in="n" type="matrix" values="0 0 0 0 0  0 0 0 0 0  0 0 0 0 0  0 7 0 0 -3.600" result="a"/>
<feComposite in="SourceGraphic" in2="a" operator="in"/>
</filter>
<filter id="ep10" x="-5%" y="-5%" width="110%" height="110%"><feGaussianBlur stdDeviation="3.500"/></filter></defs>
<g filter="url(#ep10)"><g clip-path="url(#cp10)"><g filter="url(#bp10)">
<rect x="40" y="40" width="1120" height="780" fill="#1f1d1f"/>
<!-- sky strip -->
<path d="M780 40L900 40L880 200L830 330L810 480L790 480Z" fill="#e9ebee"/>
<!-- middle grey building -->
<path d="M560 55L790 55L800 560L560 560Z" fill="#6b6b72"/>
<path d="M640 60h140v80h-140z" fill="#9a9aa0"/>
<path d="M660 75h100v50h-100z" fill="#4a4a52"/>
<path d="M560 140L785 140L785 185L560 185Z" fill="#b8b8ba"/>
<path d="M590 200L785 200L785 300L620 300Z" fill="#8e8e94"/>
<path d="M640 215h40v70h-40zM700 215h60v70h-60z" fill="#55555c"/>
<path d="M600 300L790 305L790 345L600 340Z" fill="#2c2c30"/>
<path d="M560 340L790 345L790 410L560 410Z" fill="#4a4c54"/>
<path d="M580 350h40v50h-40zM640 350h30v50h-30zM720 360h50v45h-50z" fill="#a8a8b0" opacity=".7"/>
<path d="M555 410L790 410L790 448L555 448Z" fill="#a6a8ac"/>
<path d="M600 450L790 450L790 560L600 560Z" fill="#4c5058"/>
<path d="M640 470h50v80h-50z" fill="#7c8088"/>
<path d="M720 470h50v80h-50z" fill="#32363c"/>
<!-- left dark building -->
<path d="M55 55L470 55L470 130L560 200L620 310L560 330L560 795L55 795Z" fill="#1e1c1e"/>
<path d="M220 70L450 70L450 150L330 170L220 120Z" fill="#8c5242"/>
<path d="M220 70L450 70L450 100L220 100Z" fill="#a46a58"/>
<path d="M470 55L620 55L640 130L560 150L500 120Z" fill="#22242c"/>
<path d="M60 120L200 110L520 320L520 360L200 200L60 200Z" fill="#2a282c"/>
<path d="M60 430L200 440L600 500L620 530L200 480L60 470Z" fill="#3a3a3e"/>
<path d="M200 250L500 360L500 470L200 430Z" fill="#2c2a2e"/>
<circle cx="152" cy="572" r="24" fill="#f6e6cc"/>
<circle cx="152" cy="572" r="46" fill="#8a5a38" opacity=".45"/>
<circle cx="316" cy="582" r="15" fill="#f2e4d0"/>
<circle cx="410" cy="586" r="16" fill="#f2e4d0"/>
<path d="M470 560L600 560L620 790L470 790Z" fill="#4a2c24"/>
<path d="M520 600h30v60h-30zM540 690h40v80h-40z" fill="#b08a78" opacity=".8"/>
<path d="M480 690h30v90h-30z" fill="#c8b8b0" opacity=".6"/>
<!-- orange shop -->
<path d="M570 555L780 560L780 700L640 690L570 620Z" fill="#a85c38"/>
<path d="M570 555L780 560L780 590L570 585Z" fill="#d8a078"/>
<path d="M720 600h60v90h-60z" fill="#d09060"/>
<path d="M660 600h50v70h-50z" fill="#7a3020"/>
<path d="M640 660C680 650 720 670 740 700L640 700Z" fill="#e8e0dc"/>
<!-- right building -->
<path d="M900 55L1140 55L1140 795L850 795L830 600L840 330L880 200Z" fill="#a8a4a4"/>
<path d="M900 55L1010 55L1010 100L900 100Z" fill="#5a4a48"/>
<path d="M1010 60L1140 60L1140 400L1010 470Z" fill="#aeaaa8"/>
<path d="M840 330L880 200L940 130L950 790L850 790L830 600Z" fill="#c8c8ca"/>
<path d="M830 400L860 300L870 700L830 700Z" fill="#8a8c90"/>
<path d="M950 100L1000 100L1010 290L1010 790L950 790Z" fill="#6a4a40"/>
<path d="M985 100L1005 100L1005 300L985 300Z" fill="#a8524a"/>
<path d="M910 480L950 480L950 790L910 790Z" fill="#9a9a9e"/>
<path d="M860 590L900 590L900 700L860 700Z" fill="#2e2a2a"/>
<path d="M1020 470L1140 370L1140 795L1020 795Z" fill="#25252a"/>
<path d="M1050 490L1120 440L1120 760L1050 770Z" fill="#d4d4d6"/>
<!-- street -->
<path d="M600 700L860 700L960 795L600 795Z" fill="#8a97a2"/>
<path d="M640 720L800 720L860 790L640 790Z" fill="#a2aeb8"/>
<path d="M625 655L655 650L660 750L625 750Z" fill="#1c1c22"/>
<path d="M800 620h25v80h-25z" fill="#5a3a30"/>

</g></g></g></svg>
<svg class="abs" style="left:821px;top:439px" width="134" height="94" viewBox="0 0 1200 842">
<defs><clipPath id="cp11"><rect x="60" y="55" width="1085" height="740" rx="92"/></clipPath>
<filter id="bp11" x="0" y="0" width="1200" height="842" filterUnits="userSpaceOnUse" color-interpolation-filters="sRGB">
<feTurbulence type="fractalNoise" baseFrequency=".012" numOctaves="2" seed="12" result="n"/>
<feDisplacementMap in="SourceGraphic" in2="n" scale="8" xChannelSelector="R" yChannelSelector="G" result="d"/>
<feGaussianBlur in="d" stdDeviation="7.5"/>
</filter>
<filter id="mp11" x="0" y="0" width="1200" height="842" filterUnits="userSpaceOnUse" color-interpolation-filters="sRGB">
<feTurbulence type="fractalNoise" baseFrequency=".014" numOctaves="2" seed="30" result="n"/>
<feColorMatrix in="n" type="matrix" values="0 0 0 0 0  0 0 0 0 0  0 0 0 0 0  7 0 0 0 -3.500" result="a"/>
<feComposite in="SourceGraphic" in2="a" operator="in"/>
</filter>
<filter id="kp11" x="0" y="0" width="1200" height="842" filterUnits="userSpaceOnUse" color-interpolation-filters="sRGB">
<feTurbulence type="fractalNoise" baseFrequency=".016" numOctaves="2" seed="56" result="n"/>
<feColorMatrix in="n" type="matrix" values="0 0 0 0 0  0 0 0 0 0  0 0 0 0 0  0 7 0 0 -3.600" result="a"/>
<feComposite in="SourceGraphic" in2="a" operator="in"/>
</filter>
<filter id="ep11" x="-5%" y="-5%" width="110%" height="110%"><feGaussianBlur stdDeviation="3.500"/></filter></defs>
<g filter="url(#ep11)"><g clip-path="url(#cp11)"><g filter="url(#bp11)">
<defs>
<linearGradient id="p11s" x1="0" y1="0" x2="0" y2="1"><stop offset="0" stop-color="#76b6e0"/><stop offset=".3" stop-color="#93c6e6"/><stop offset=".6" stop-color="#bcd9e8"/></linearGradient>
</defs>
<rect x="40" y="40" width="1120" height="780" fill="url(#p11s)"/>
<!-- right glass tower -->
<path d="M850 55L960 55L960 330L880 400L820 450L820 300Z" fill="#7b9bb8"/>
<path d="M850 55L900 55L870 300L820 420L820 300Z" fill="#9ab8d0"/>
<!-- left facade -->
<path d="M150 60L290 60L420 250L690 500L690 560L560 600L60 600L60 140Z" fill="#c49e8c"/>
<path d="M75 100L150 70L300 250L300 340L200 290L75 220Z" fill="#c48a92"/>
<path d="M130 200L280 280L280 330L130 250Z" fill="#d6d8e4"/>
<!-- left glass building -->
<path d="M270 55L500 55L540 200L560 330L640 400L740 495L740 530L700 520L280 100Z" fill="#6c8cab"/>
<path d="M330 60L470 60L520 250L440 200Z" fill="#5f7f9f"/>
<path d="M560 330L640 400L740 495L740 540L640 450L560 380Z" fill="#a8b0b8"/>
<path d="M500 90h60v14h-60z" fill="#3a5a70"/>
<path d="M538 90h16v230h-16z" fill="#9ab0c0"/>
<path d="M690 330h14v120h-14z" fill="#7a8a98"/>
<path d="M160 60L290 60L740 500L720 512L270 100Z" fill="#3a3034"/>
<path d="M315 215L410 290L415 420L325 370Z" fill="#c04c3c"/>
<path d="M350 250h18v130h-18z" fill="#e0a090"/>
<path d="M420 300L520 390L520 470L420 420Z" fill="#c8b4a8"/>
<path d="M60 225L330 330L330 360L60 260Z" fill="#3a3030"/>
<path d="M60 260L330 360L340 450L60 400Z" fill="#cbaa88"/>
<path d="M60 380L340 440L560 520L560 560L340 490L60 440Z" fill="#4a3e40"/>
<path d="M60 440L340 490L420 520L420 560L60 500Z" fill="#d8c8c0"/>
<path d="M60 470L380 520L380 640L280 700L80 740L60 700Z" fill="#cdc4c6"/>
<path d="M60 470L380 520L380 545L60 500Z" fill="#5a4e50"/>
<path d="M240 510h25v170h-25z" fill="#8a8288"/>
<path d="M380 520L560 560L640 540L560 620L380 660Z" fill="#5a4c50"/>
<path d="M420 540h40v70h-40zM490 555h30v50h-30z" fill="#b8a8a8"/>
<!-- left pavement -->
<path d="M60 740L280 690L560 590L650 560L690 580L500 700L420 795L60 795Z" fill="#8c8a8c"/>
<path d="M200 720L560 600L580 620L340 740L260 790L120 790Z" fill="#a6a4a6"/>
<path d="M60 760L160 790L60 795Z" fill="#2a2628"/>
<path d="M380 700L520 640L540 660L440 790L360 790Z" fill="#4a4648"/>
<!-- street -->
<path d="M690 575L755 575L930 795L470 795Z" fill="#5c7c82"/>
<path d="M700 580L745 580L800 680L620 680Z" fill="#6f9094"/>
<!-- right shops -->
<path d="M960 55L1145 55L1145 795L930 795L800 620L780 520L820 440L880 390L960 320Z" fill="#3c2e28"/>
<path d="M965 60L1145 60L1145 270L965 290Z" fill="#c9b2ba"/>
<path d="M985 70L1060 70L1040 150L990 150Z" fill="#2a2a38"/>
<path d="M1060 90L1140 80L1140 200L1060 240Z" fill="#dcc8cc"/>
<path d="M900 330L1145 260L1145 330L900 400Z" fill="#b8b8c0"/>
<path d="M940 340L1050 320L1050 460L940 470Z" fill="#38485a"/>
<path d="M1050 310L1145 290L1145 450L1050 460Z" fill="#8a949c"/>
<path d="M830 430L900 390L900 500L830 520Z" fill="#a8a098"/>
<path d="M820 470L1145 450L1145 500L830 520Z" fill="#5a4a40"/>
<path d="M930 515L1085 505L1085 600L930 600Z" fill="#d99c52"/>
<path d="M960 530h60v50h-60z" fill="#f2cc88"/>
<path d="M850 540h60v40h-60z" fill="#d8c8b0"/>
<path d="M1085 480L1145 480L1145 795L1085 795Z" fill="#3a2420"/>
<path d="M930 600L1085 600L1085 795L930 795Z" fill="#4a342a"/>
<path d="M960 620h40v150h-40zM1030 620h30v150h-30z" fill="#8a6a50" opacity=".6"/>
<path d="M760 615L800 600L900 720L930 795L900 795L850 720Z" fill="#d4dce4"/>
<path d="M790 560L850 560L900 700L860 720L800 620Z" fill="#7c8894"/>
<path d="M700 520h50v60h-50z" fill="#d8d4d4"/>
<path d="M740 500h20v130h-20z" fill="#3a4048"/>

</g></g></g></svg>
<div id="wm" class="abs"></div>
</body>
</html>
